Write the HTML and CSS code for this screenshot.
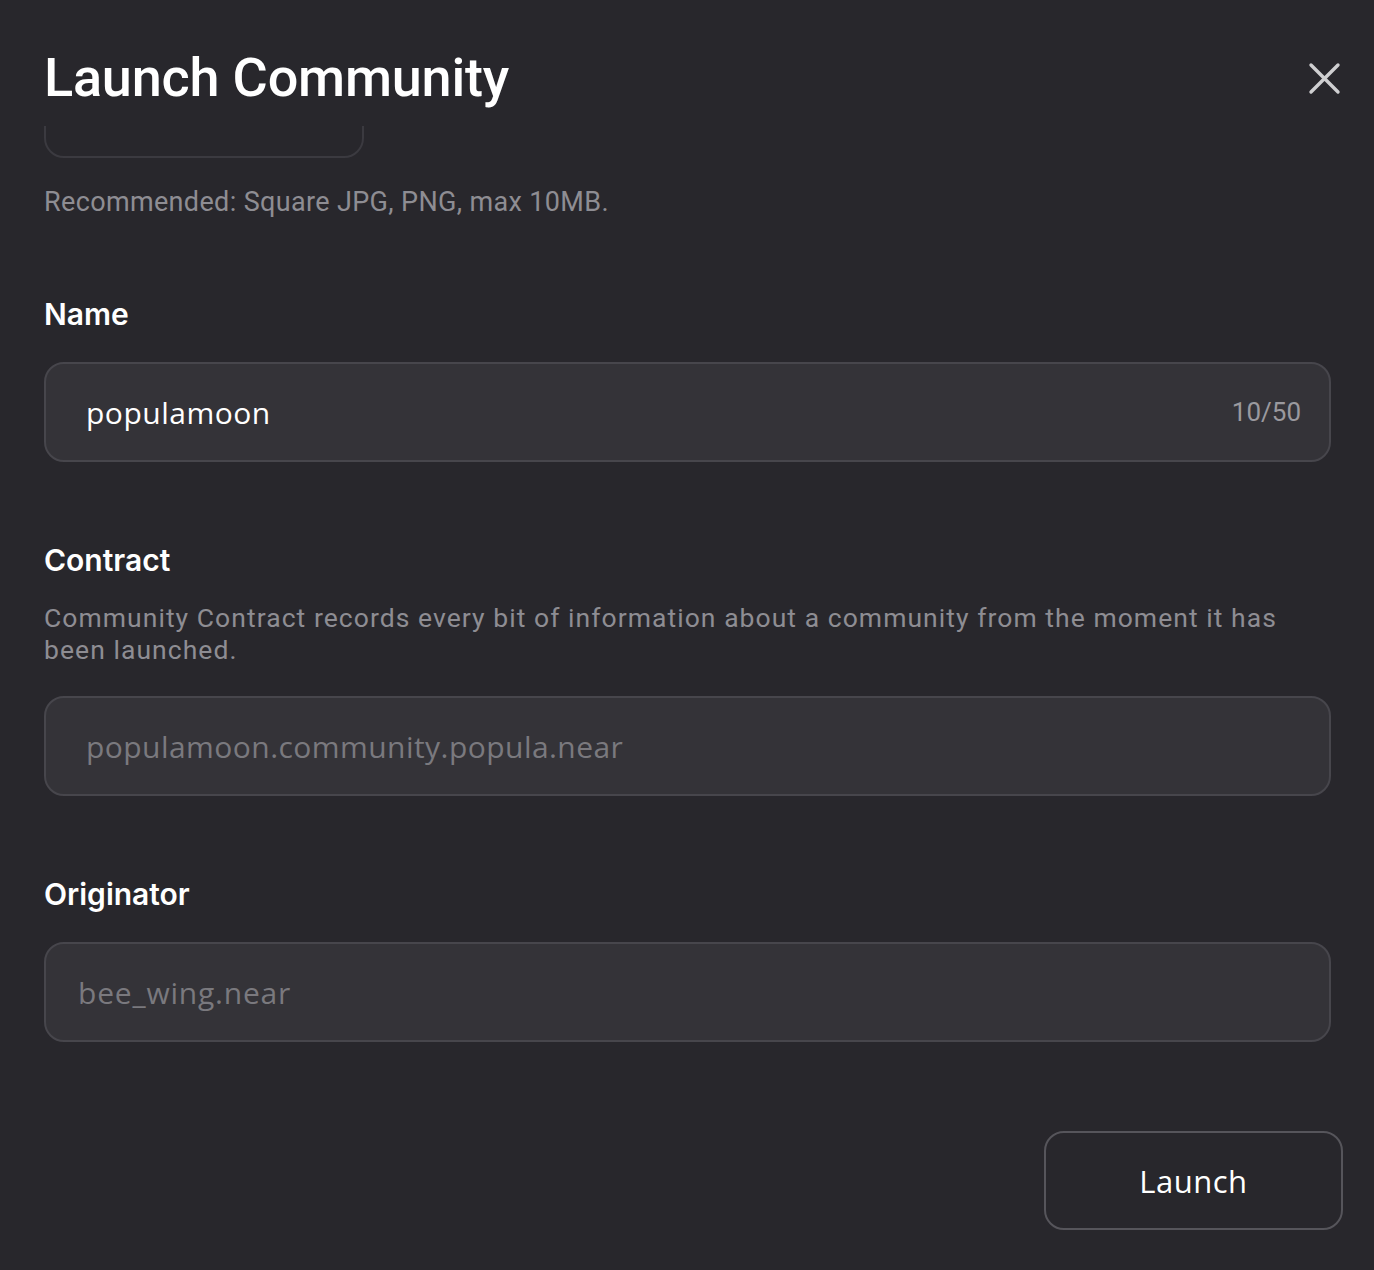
FILE: index.html
```html
<!DOCTYPE html>
<html>
<head>
<meta charset="utf-8">
<link rel="stylesheet" href="styles.css">
</head>
<body>
<div class="modal">
  <header class="modal-header">
    <h1 class="title">Launch Community</h1>
    <button class="close" aria-label="Close">
      <svg width="34" height="34" viewBox="0 0 34 34"><path d="M4 4L31 31M31 4L4 31" stroke="#cfcfd1" stroke-width="3.4" stroke-linecap="round"/></svg>
    </button>
  </header>
  <div class="modal-body">
    <div class="image-box"></div>
    <p class="hint">Recommended: Square JPG, PNG, max 10MB.</p>

    <section class="field">
      <h2 class="label">Name</h2>
      <div class="input input-name">
        <span class="value">populamoon</span>
        <span class="counter">10/50</span>
      </div>
    </section>

    <section class="field">
      <h2 class="label">Contract</h2>
      <p class="desc">Community Contract records every bit of information about a community from the moment it has been launched.</p>
      <div class="input input-contract">
        <span class="placeholder">populamoon.community.popula.near</span>
      </div>
    </section>

    <section class="field">
      <h2 class="label">Originator</h2>
      <div class="input input-originator">
        <span class="placeholder">bee_wing.near</span>
      </div>
    </section>

    <div class="actions">
      <button class="launch">Launch</button>
    </div>
  </div>
</div>
</body>
</html>
```

FILE: styles.css
```css
* { box-sizing: border-box; }
html, body { margin: 0; padding: 0; }
body {
  background: #28272c;
  color: #ffffff;
  font-family: "Inter", "Roboto", sans-serif;
  width: 1374px;
  height: 1270px;
  overflow: hidden;
}
.modal {
  padding: 0 31px 0 44px;
}
.modal-header {
  height: 126px;
  display: flex;
  align-items: flex-start;
  justify-content: space-between;
  position: relative;
  z-index: 1;
  background: #28272c;
}
.title {
  margin: 48px 0 0 0;
  font-family: "Roboto", sans-serif;
  font-weight: 500;
  font-size: 54px;
  line-height: 60px;
  letter-spacing: -0.2px;
}
.close {
  margin: 61px 2px 0 0;
  padding: 0;
  background: none;
  border: none;
  width: 34px;
  height: 34px;
  cursor: pointer;
}
.close svg { display: block; }
.modal-body {
  padding-right: 12px;
}
.image-box {
  width: 320px;
  height: 60px;
  margin-top: -28px;
  border: 2px solid #3b3a40;
  border-radius: 20px;
}
.hint {
  margin: 26px 0 0 0;
  font-family: "Roboto", sans-serif;
  font-size: 27px;
  line-height: 36px;
  letter-spacing: 0.35px;
  color: #8e8d93;
}
.label {
  margin: 0;
  font-family: "Inter", sans-serif;
  font-weight: 600;
  font-size: 30px;
  line-height: 36px;
  color: #ffffff;
}
.field:nth-of-type(1) .label { margin-top: 76px; }
.field:nth-of-type(2) .label { margin-top: 80px; }
.field:nth-of-type(3) .label { margin-top: 80px; }
.input {
  height: 100px;
  border: 2px solid #47464c;
  border-radius: 20px;
  background: #343338;
  display: flex;
  align-items: center;
  justify-content: space-between;
  padding: 0 28px 0 40px;
  margin-top: 30px;
}
.value {
  font-family: "Open Sans", sans-serif;
  font-size: 30px;
  letter-spacing: 0.5px;
  color: #ffffff;
}
.counter {
  font-family: "Roboto", sans-serif;
  font-size: 26px;
  color: #9a999e;
}
.placeholder {
  font-family: "Open Sans", sans-serif;
  font-size: 30px;
  letter-spacing: 0.45px;
  color: #7a797e;
}
.desc {
  margin: 24px 0 0 0;
  font-family: "Roboto", sans-serif;
  font-size: 26.5px;
  line-height: 32px;
  letter-spacing: 1.05px;
  color: #8e8d93;
}
.input-originator { padding-left: 32px; }
.input-originator .placeholder { letter-spacing: 0.8px; }
.actions {
  display: flex;
  justify-content: flex-end;
  margin-top: 89px;
  margin-right: -12px;
}
.launch {
  width: 299px;
  height: 99px;
  background: transparent;
  border: 2px solid #56555b;
  border-radius: 20px;
  color: #ffffff;
  font-family: "Open Sans", sans-serif;
  font-size: 31px;
  letter-spacing: 0.5px;
}
```
